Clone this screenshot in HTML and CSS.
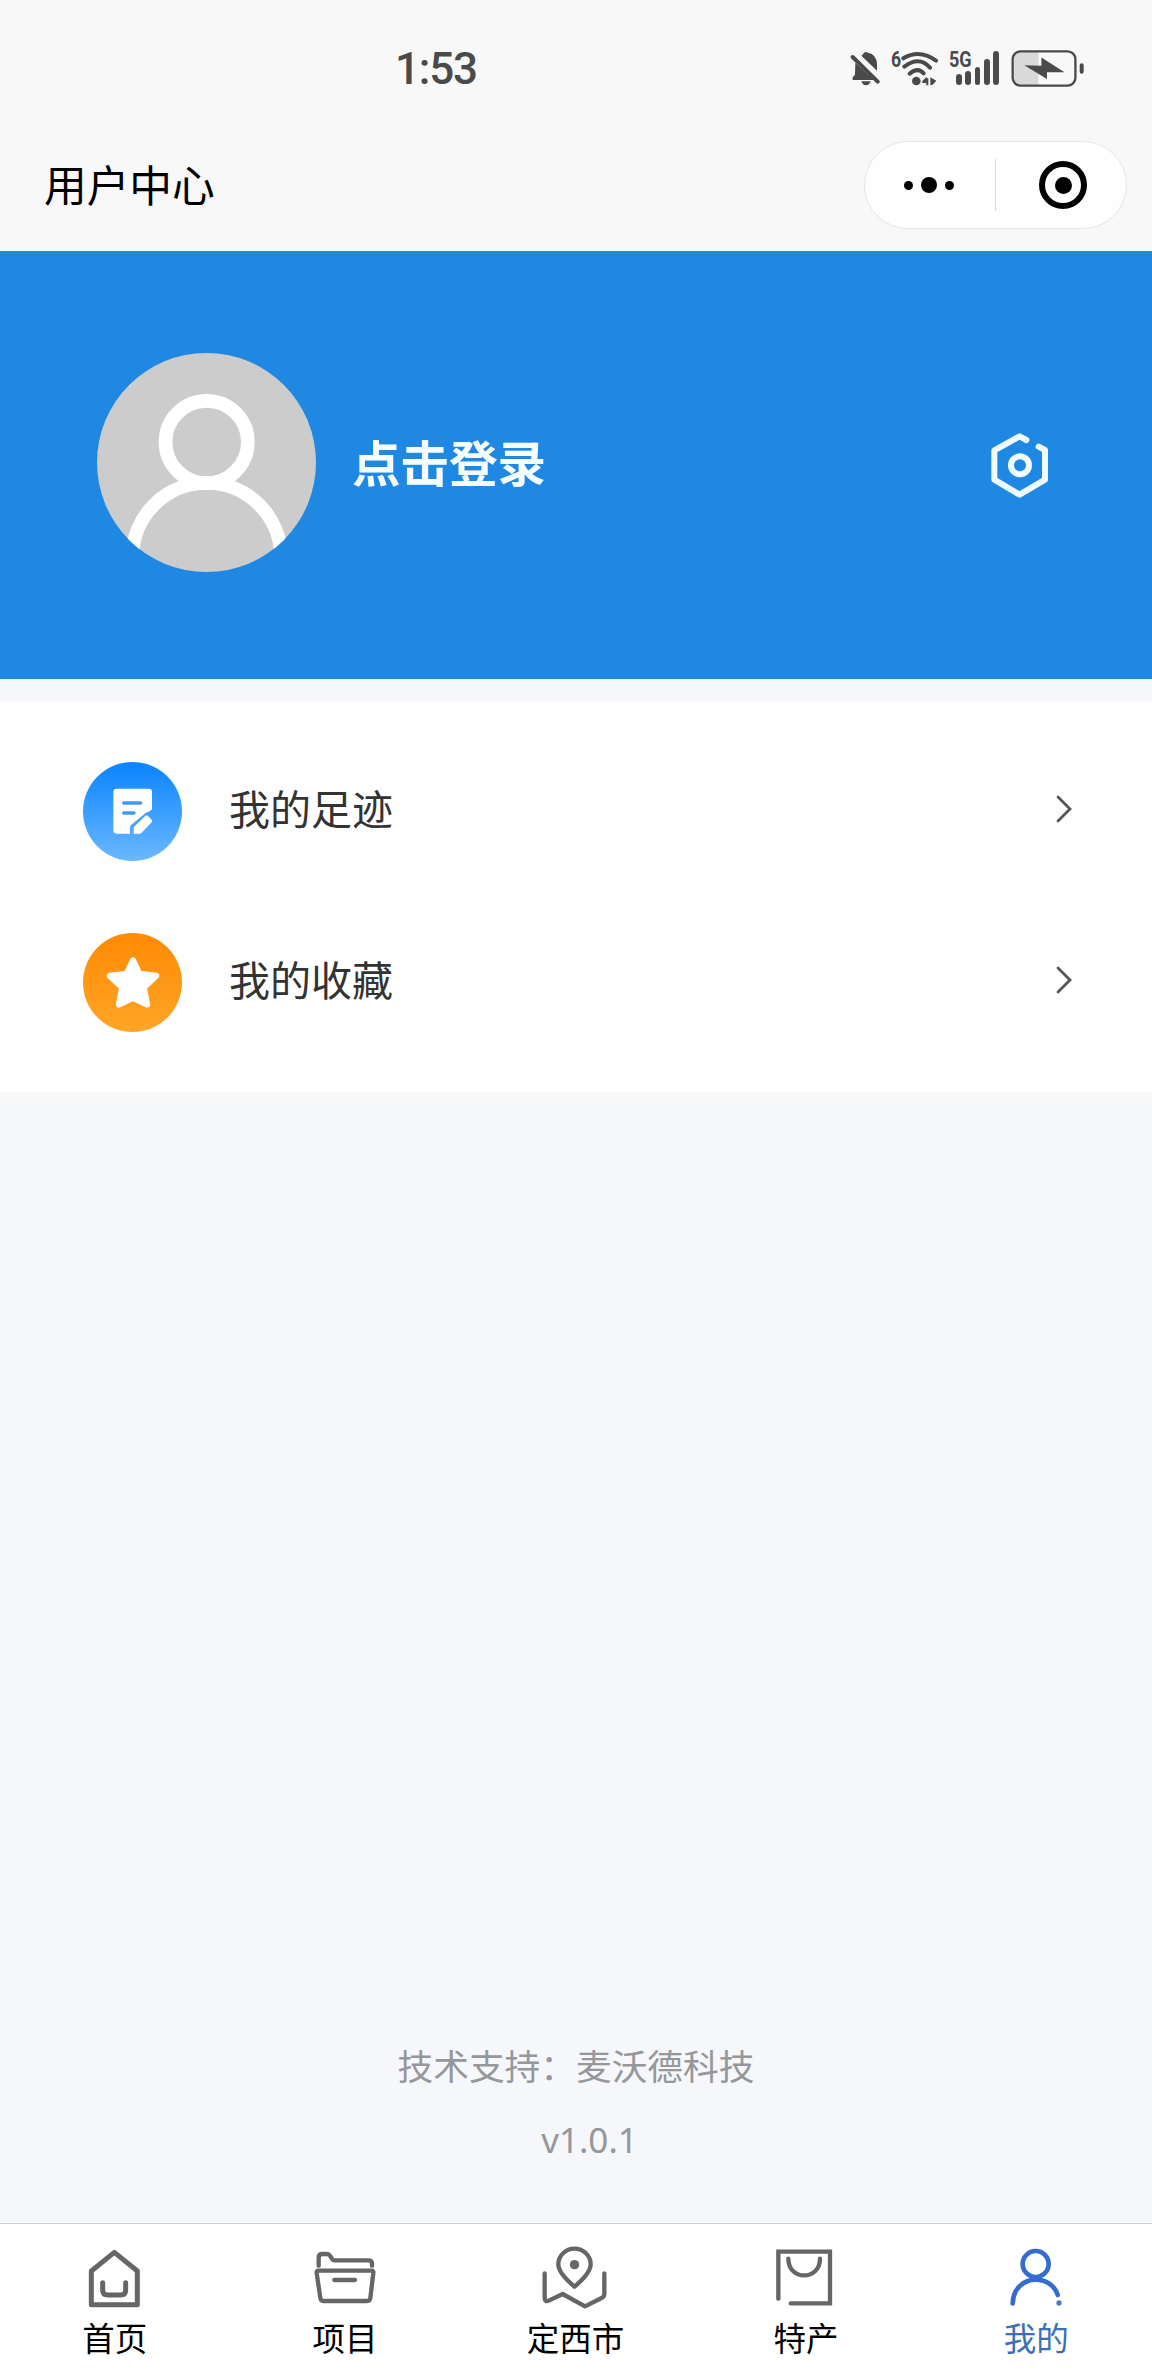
FILE: index.html
```html
<!DOCTYPE html>
<html lang="zh-CN">
<head>
    <meta charset="UTF-8">
    <meta name="viewport" content="width=device-width, initial-scale=1.0">
    <title>用户中心</title>
    <link rel="stylesheet" href="styles.css">
</head>
<body>
    <header>
        <div class="status-bar">
            <span class="time">1:53</span>
            <div class="status-icons">
                <svg class="bell" viewBox="0 0 93 108">
                    <path class="fill" d="M16 38 L72 90 H8 V82 L15 74Z M34 17 Q40 12 42 8 Q48 4 54 8 Q80 13 81 42 V62Z M34 94 H62 Q58 106 48 106 Q38 106 34 94Z"/>
                    <path class="line" d="M8 21 L83 95"/>
                </svg>
                <span class="wifi-gen">6</span>
                <svg class="wifi" viewBox="0 0 114 108">
                    <path class="line" d="M7 25 Q55 -4 105 32 M10 50 Q55 16 87 53 M26 71 Q50 50 68 70"/>
                    <circle class="fill" cx="46" cy="93" r="13"/>
                    <path class="fill" d="M64 93 L77 80 V85 H82 V106 H76 V99 H64Z M88 82 L106 92 L95 104 L88 106Z"/>
                </svg>
                <div class="signal">
                    <span>5G</span>
                    <i></i><i></i><i></i><i></i><i></i>
                </div>
                <svg class="battery" viewBox="0 0 222 112">
                    <path class="level" d="M82 6 H30 Q6 6 6 30 V82 Q6 106 30 106 H82Z"/>
                    <rect class="outline" x="4" y="4" width="190" height="104" rx="24"/>
                    <path class="fill" d="M39 46 L91 48 V23 L161 67 L108 67 V88Z"/>
                    <rect class="fill" x="207" y="40" width="12" height="32" rx="6"/>
                </svg>
            </div>
        </div>
        <div class="nav-bar">
            <h1>用户中心</h1>
            <div class="capsule">
                <div class="dots"><i></i><i class="big"></i><i></i></div>
                <div class="close"><i></i></div>
            </div>
        </div>
    </header>

    <section class="banner">
        <svg class="avatar" viewBox="0 0 657 657">
            <circle cx="329" cy="267" r="123.5"/>
            <circle cx="329" cy="613" r="223"/>
        </svg>
        <h2>点击登录</h2>
        <svg class="setting" viewBox="0 0 198 216">
            <path d="M118 33 L98 22 L22 64 V152 L98 197 L174 152 V63 L155 53"/>
            <circle cx="99" cy="109" r="27"/>
        </svg>
    </section>

    <ul class="menu">
        <li>
            <svg class="menu-icon blue" viewBox="0 0 297 297">
                <path d="M101 80 H197 Q207 80 207 90 V142 Q202 148 188 153 L143 190 Q140 195 141 215 H101 Q91 215 91 205 V90 Q91 80 101 80Z"/>
                <path d="M187 161 Q191 158 195 162 L206 173 Q210 177 206 181 L176 212 Q173 215 169 215 H152 V196Z"/>
                <path class="text-line" d="M122 123 H173 M122 153 H153"/>
            </svg>
            <span>我的足迹</span>
            <svg class="arrow" viewBox="0 0 16 28"><path d="M2 2 L14 14 L2 26"/></svg>
        </li>
        <li>
            <svg class="menu-icon orange" viewBox="0 0 297 297">
                <path class="star" d="M150 83 L169 123 L219 129 L182 163 L192 214 L150 194 L108 214 L118 163 L81 129 L131 123Z"/>
            </svg>
            <span>我的收藏</span>
            <svg class="arrow" viewBox="0 0 16 28"><path d="M2 2 L14 14 L2 26"/></svg>
        </li>
    </ul>

    <footer>
        <p>技术支持：麦沃德科技</p>
        <p class="version">v1.0.1</p>
    </footer>

    <nav class="tab-bar">
        <div class="tab">
            <svg viewBox="0 0 210 192">
                <path class="thick" d="M103 22 L172 78 V179 H34 V78Z M68 113 v22 q0 15 15 15 h39 q15 0 15 -15 v-22"/>
            </svg>
            <span>首页</span>
        </div>
        <div class="tab">
            <svg viewBox="0 0 210 192">
                <path d="M23 62 v-24 q0 -11 11 -11 h14 q6 0 9 5 l7 11 q2 3 7 3 h102 q10 0 10 10 v6"/>
                <path d="M22 77 H182 Q188 77 187 84 L178 159 Q177 168 168 168 H38 Q29 168 28 159 L17 84 Q16 77 22 77Z M70 105 h62"/>
            </svg>
            <span>项目</span>
        </div>
        <div class="tab">
            <svg viewBox="0 0 210 192">
                <path d="M100.5 125 C85 112 52 85 52 58 A48.5 47 0 0 1 149 58 C149 85 116 112 100.5 125Z"/>
                <path d="M11 85 V158 Q11 173 25 166 L65 147 L132 184 L182 159 Q190 155 190 147 V85"/>
                <circle class="dot" cx="100.5" cy="59" r="14"/>
            </svg>
            <span>定西市</span>
        </div>
        <div class="tab">
            <svg viewBox="0 0 210 192">
                <path class="square" d="M22 161 V20 H177 V175 H59"/>
                <path d="M52 41 C52 108 147 108 147 41"/>
            </svg>
            <span>特产</span>
        </div>
        <div class="tab active">
            <svg viewBox="0 0 210 192">
                <circle cx="101" cy="57" r="39"/>
                <path d="M32 175 C33 130 66 104 101 104 C134 104 160 124 167 150"/>
                <circle class="dot" cx="171" cy="174" r="8"/>
            </svg>
            <span>我的</span>
        </div>
    </nav>
</body>
</html>
```
FILE: styles.css
```css
* {
    margin: 0;
    padding: 0;
    box-sizing: border-box;
}

body {
    font-family: 'Noto Sans CJK SC', sans-serif;
    background-color: #f5f7fb;
    color: #333;
    height: 2376px;
    display: flex;
    flex-direction: column;
}

svg {
    display: block;
    flex-shrink: 0;
}

header {
    height: 251px;
    background-color: #f8f8f8;
}

/* phone status bar */
.status-bar {
    height: 136px;
    padding: 0 67px 0 395px;
    display: flex;
    align-items: center;
    justify-content: space-between;
}

.time {
    padding-top: 2px;
    font-family: Roboto, sans-serif;
    font-size: 44px;
    font-weight: 500;
    line-height: 52px;
    letter-spacing: -1.2px;
    color: #4a4a4a;
}

.status-icons {
    display: flex;
    align-items: center;
    color: #4a4a4a;
}

.status-icons .fill {
    fill: #4a4a4a;
}

.status-icons .line {
    fill: none;
    stroke: #4a4a4a;
    stroke-width: 12;
    stroke-linecap: round;
}

.bell {
    width: 31px;
    height: 36px;
}

.wifi-gen {
    width: 11px;
    height: 36px;
    margin-left: 9px;
    font: 700 22px/20px 'Roboto', sans-serif;
    transform: scaleX(0.8);
}

.wifi {
    width: 38px;
    height: 36px;
}

.signal {
    position: relative;
    display: flex;
    align-items: flex-end;
    gap: 3.5px;
    height: 34px;
    margin-left: 17px;
}

.signal span {
    position: absolute;
    left: -7px;
    top: 0;
    font: 700 22px/17px 'Roboto', sans-serif;
    transform: scaleX(0.82);
    transform-origin: left;
}

.signal i {
    width: 5.8px;
    height: 11px;
    border-radius: 3px;
    background-color: #4a4a4a;
}

.signal i:nth-of-type(2) {
    height: 14px;
}

.signal i:nth-of-type(3) {
    height: 18px;
}

.signal i:nth-of-type(4) {
    height: 26px;
}

.signal i:nth-of-type(5) {
    height: 34px;
}

.battery {
    width: 74px;
    height: 37px;
    margin-left: 12px;
}

.battery .level {
    fill: #d9d9d9;
}

.battery .outline {
    fill: none;
    stroke: #4a4a4a;
    stroke-width: 7;
}

.nav-bar {
    height: 98px;
    padding: 0 25px 0 44px;
    display: flex;
    align-items: center;
    justify-content: space-between;
}

h1 {
    padding-bottom: 4px;
    font-size: 42.7px;
    font-weight: 400;
    line-height: 60px;
    color: #000;
}

.capsule {
    width: 263px;
    height: 88px;
    border: 1px solid #e6e6e6;
    border-radius: 44px;
    background-color: #fefefe;
    display: flex;
    align-items: center;
}

.dots {
    width: 131px;
    height: 52px;
    padding-right: 2px;
    border-right: 1px solid #d8d8d8;
    display: flex;
    align-items: center;
    justify-content: center;
    gap: 8px;
}

.dots i {
    width: 9px;
    height: 9px;
    border-radius: 50%;
    background-color: #000;
}

.dots .big {
    width: 16px;
    height: 16px;
}

.close {
    width: 48px;
    height: 48px;
    margin-left: 43px;
    border: 6px solid #000;
    border-radius: 50%;
    display: flex;
    align-items: center;
    justify-content: center;
}

.close i {
    width: 17px;
    height: 17px;
    border-radius: 50%;
    background-color: #000;
}

.banner {
    height: 428px;
    padding: 0 99px 0 97px;
    background-color: #1e88e3;
    display: flex;
    align-items: center;
}

.avatar {
    width: 219px;
    height: 219px;
    margin-bottom: 5px;
    border-radius: 50%;
    background-color: #cccccc;
}

.avatar circle {
    fill: none;
    stroke: #fff;
    stroke-width: 41;
}

.banner h2 {
    flex: 1;
    margin-left: 36px;
    padding-bottom: 8px;
    font-size: 48.5px;
    font-weight: 700;
    line-height: 70px;
    color: #f6fdff;
}

.setting {
    width: 66px;
    height: 72px;
}

.setting path,
.setting circle {
    fill: none;
    stroke: #f0fbff;
    stroke-width: 18;
    stroke-linecap: round;
    stroke-linejoin: round;
}

.menu {
    height: 400px;
    margin-top: 22px;
    padding: 25px 80px 0 83px;
    border-bottom: 9px solid #f8f8f8;
    background-color: #fefefe;
    list-style: none;
}

.menu li {
    height: 171px;
    display: flex;
    align-items: center;
}

.menu span {
    flex: 1;
    margin-left: 47px;
    padding-bottom: 9px;
    font-size: 41px;
    line-height: 60px;
}

.menu-icon {
    width: 99px;
    height: 99px;
    border-radius: 50%;
    fill: #fff;
}

.blue {
    background: linear-gradient(#0a84ff, #6bb8ff);
}

.orange {
    background: linear-gradient(#ff8a05, #ffa526);
}

.text-line {
    fill: none;
    stroke: #4299ee;
    stroke-width: 10;
    stroke-linecap: round;
}

.star {
    stroke: #fff;
    stroke-width: 19;
    stroke-linejoin: round;
}

.arrow {
    width: 16px;
    height: 28px;
    margin-bottom: 6px;
    fill: none;
    stroke: #555;
    stroke-width: 2.8;
    stroke-linecap: round;
}

footer {
    margin-top: auto;
    padding-bottom: 47px;
    text-align: center;
    font-size: 35.7px;
    line-height: 73px;
    color: #96979b;
}

.version {
    padding: 2px 0 0 27px;
    font-family: 'Noto Sans', sans-serif;
    font-size: 35px;
}

.tab-bar {
    height: 153px;
    border-top: 1px solid #cfd0d4;
    background-color: #fff;
    display: flex;
}

.tab {
    flex: 1;
    padding-top: 21px;
    display: flex;
    flex-direction: column;
    align-items: center;
    color: #000;
}

.tab svg {
    width: 70px;
    height: 64px;
    fill: none;
    stroke: #666;
    stroke-width: 13;
    stroke-linecap: round;
    stroke-linejoin: round;
}

.tab .thick {
    stroke-width: 15;
}

.tab .square {
    stroke-linejoin: miter;
}

.tab .dot {
    fill: #666;
    stroke: none;
}

.tab span {
    margin-top: 6px;
    padding-right: 1px;
    font-size: 32.5px;
    line-height: 44px;
}

.active {
    color: #3a70b8;
}

.tab.active svg {
    stroke: #346ccf;
    stroke-width: 14;
}

.tab.active .dot {
    fill: #4f7dc4;
}
```
